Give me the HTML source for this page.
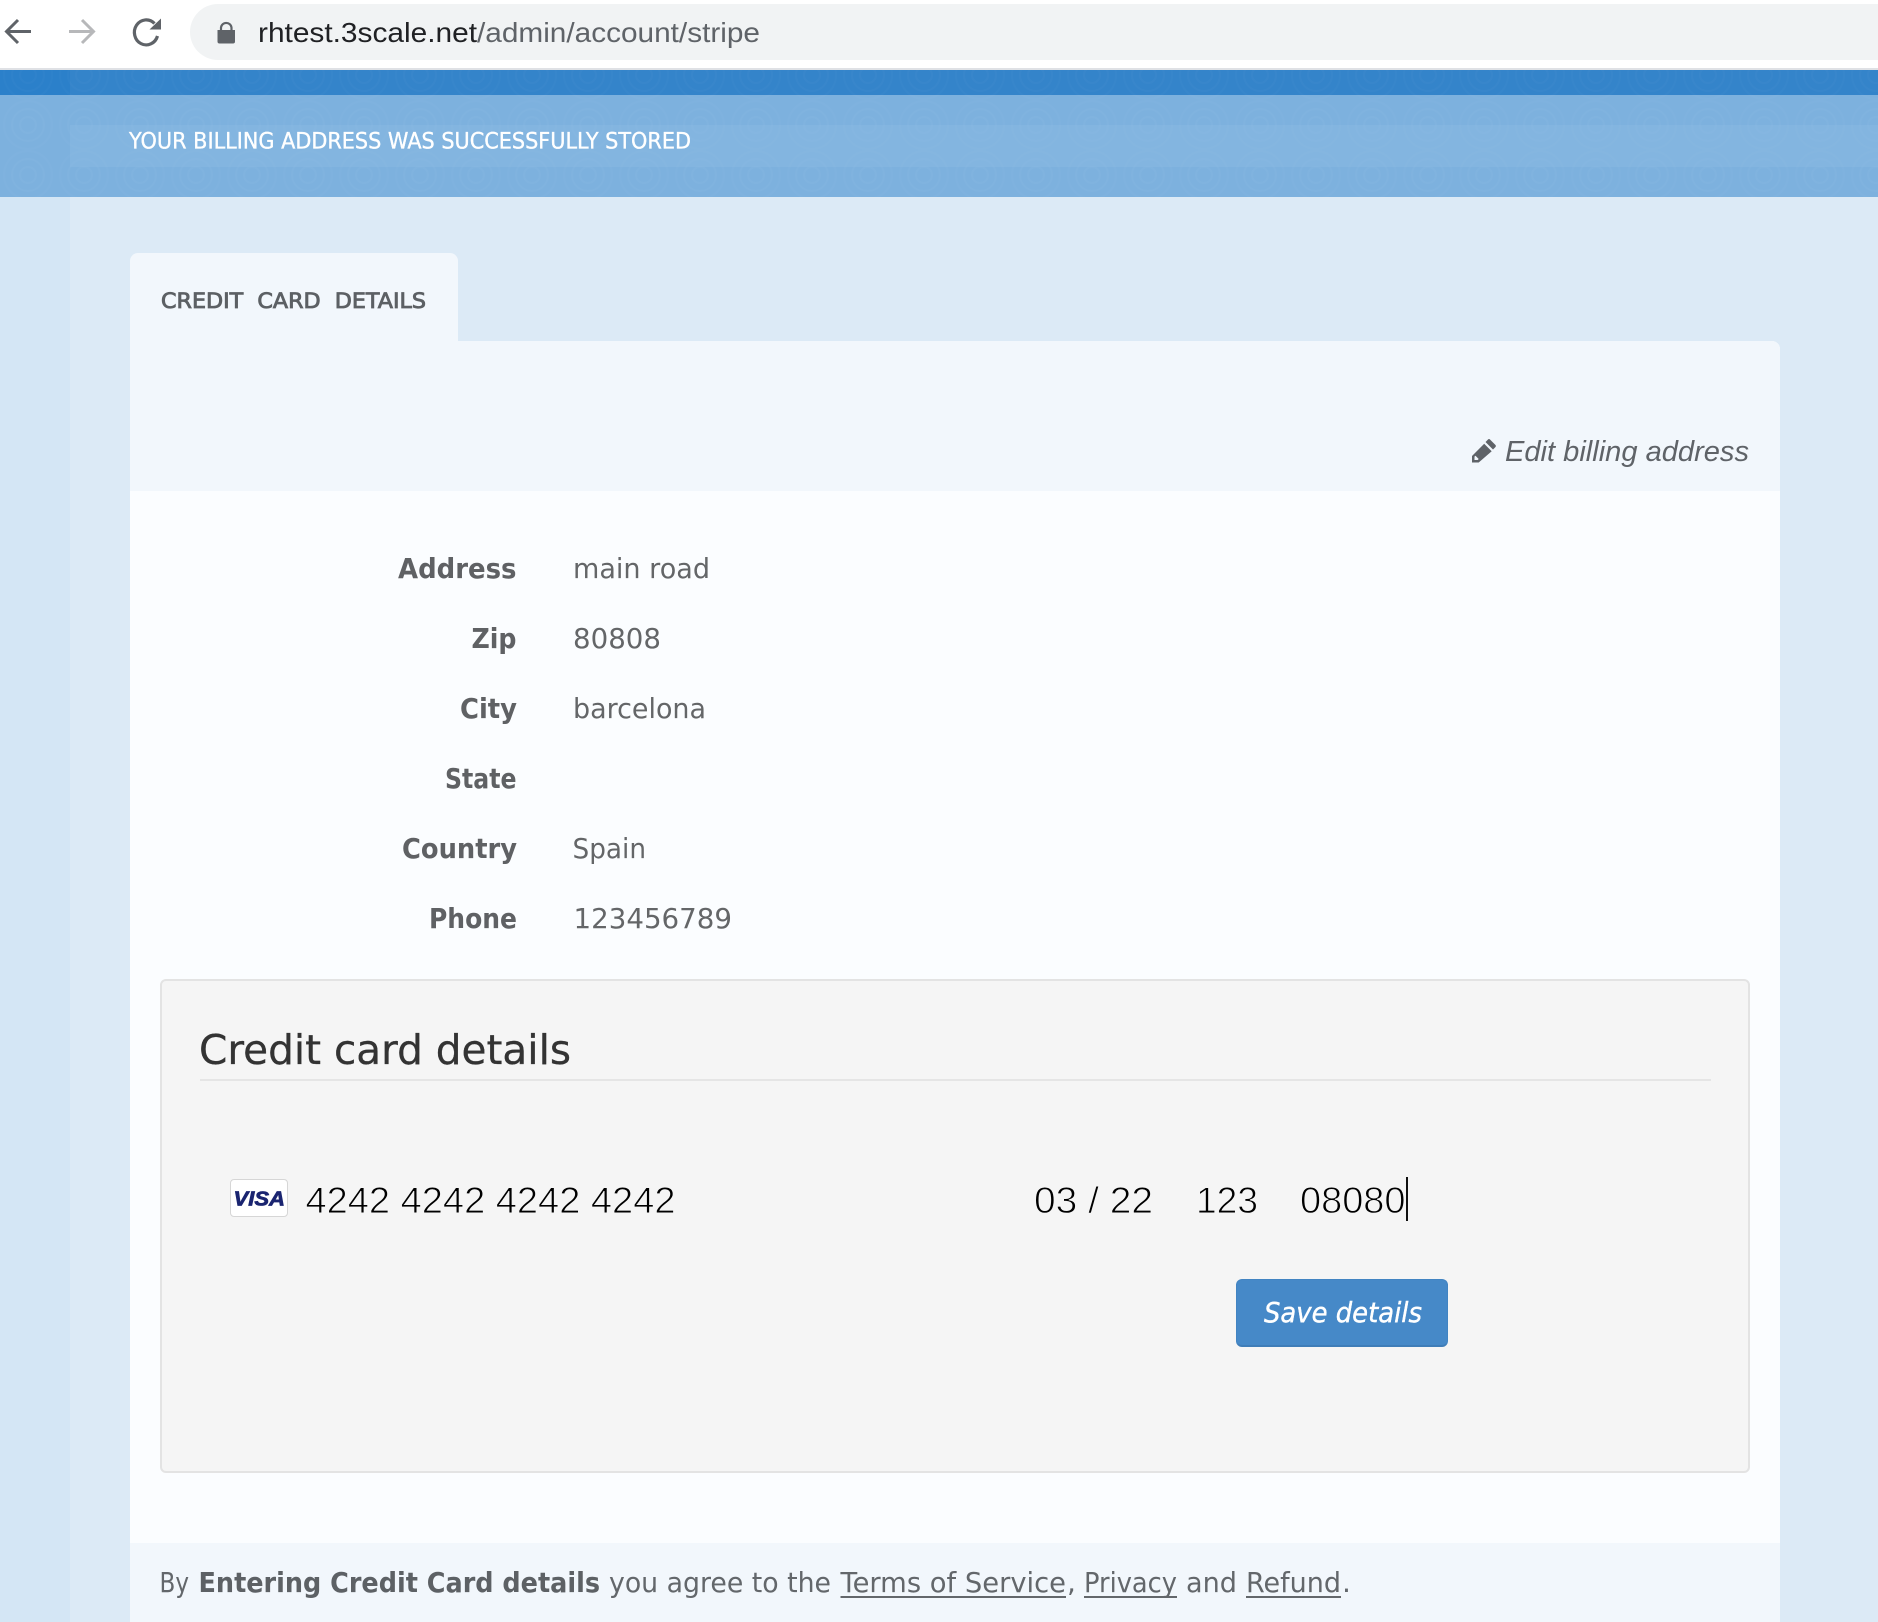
<!DOCTYPE html>
<html lang="en">
<head>
<meta charset="utf-8">
<title>Credit card details</title>
<style>
html,body{margin:0;padding:0;background:#dceaf6}
body{position:relative;width:1878px;height:1622px;overflow:hidden}
div{position:absolute;box-sizing:border-box}
svg{position:absolute;left:0;top:0}
text{white-space:pre}
.l{font-family:"DejaVu Sans",sans-serif;font-weight:700;font-size:27.5px;fill:#5f6164}
.v{font-family:"DejaVu Sans",sans-serif;font-size:27.5px;fill:#646668}
.c{font-family:"Liberation Sans",sans-serif;font-size:37px;fill:#000;stroke:#f5f5f5;stroke-width:.9px}
.f{font-family:"DejaVu Sans",sans-serif;font-size:28px;fill:#63676b}
.fb{font-family:"DejaVu Sans",sans-serif;font-size:28px;font-weight:700;fill:#5d6165}
</style>
</head>
<body>
<div style="left:0;top:0;width:1878px;height:70px;background:#fff;border-bottom:2px solid #dfe1e5"></div>
<div style="left:190px;top:4px;width:1688px;height:56px;background:#f1f3f4;border-radius:28px 0 0 28px"></div>
<div style="left:0;top:70px;width:1878px;height:25px;background:#3484ca"></div>
<div style="left:0;top:70px;width:70px;height:25px;background:#2b80ca"></div>
<div style="left:0;top:95px;width:1878px;height:102px;background:#7db1de"></div>
<div style="left:70px;top:125px;width:1808px;height:42px;background:#83b5e0"></div>
<div style="left:0;top:197px;width:70px;height:1425px;background:#d4e6f5"></div>
<div style="left:130px;top:253px;width:328px;height:90px;background:#f2f7fc;border-radius:8px 8px 0 0"></div>
<div style="left:130px;top:341px;width:1650px;height:1281px;background:#fbfdff;border-radius:0 8px 0 0;overflow:hidden">
  <div style="left:0;top:0;width:1650px;height:150px;background:#f2f7fc"></div>
  <div style="left:0;top:1202px;width:1650px;height:79px;background:#f2f7fc"></div>
</div>
<div style="left:160px;top:979px;width:1590px;height:494px;background:#f5f5f5;border:2px solid #e3e3e3;border-radius:6px"></div>
<div style="left:200px;top:1079px;width:1511px;height:2px;background:#e5e5e5"></div>
<div style="left:230px;top:1179px;width:58px;height:38px;background:#fff;border:1px solid #d6d6d6;border-radius:4px"></div>
<div style="left:1236px;top:1279px;width:212px;height:68px;background:#4689c8;border:1px solid #4284c2;border-bottom:2px solid #3f7db8;border-radius:6px"></div>

<svg width="1878" height="1622" viewBox="0 0 1878 1622" xmlns="http://www.w3.org/2000/svg">
  <defs>
    <pattern id="rings" width="56" height="50" patternUnits="userSpaceOnUse">
      <circle cx="28" cy="25" r="8" fill="none" stroke="#fff" stroke-opacity=".02" stroke-width="2"/>
      <circle cx="28" cy="25" r="16" fill="none" stroke="#fff" stroke-opacity=".018" stroke-width="2"/>
      <circle cx="28" cy="25" r="24" fill="none" stroke="#fff" stroke-opacity=".015" stroke-width="2"/>
    </pattern>
  </defs>
  <rect x="0" y="70" width="1878" height="127" fill="url(#rings)"/>

  <!-- browser icons -->
  <path d="M31 31.5H8M18 20L6.5 31.5 18 43" fill="none" stroke="#5f6368" stroke-width="3"/>
  <path d="M69 31.5H92M82 20L93.5 31.5 82 43" fill="none" stroke="#b7b8ba" stroke-width="3"/>
  <path d="M157.500 36A11.800 12.500 0 1 1 154.500 23.500" fill="none" stroke="#5f6368" stroke-width="3.200"/>
  <path d="M149.500 29.500H161V18.500Z" fill="#5f6368"/>
  <path d="M217.500 30h17.500v11.500a2 2 0 0 1-2 2h-13.500a2 2 0 0 1-2-2Z" fill="#5f6368"/>
  <path d="M221 31v-3.500a5.300 5.300 0 0 1 10.500 0V31" fill="none" stroke="#5f6368" stroke-width="2.200"/>
  <text x="258" y="42" font-family="Liberation Sans" font-size="28" fill="#202124" textLength="219" lengthAdjust="spacingAndGlyphs">rhtest.3scale.net</text>
  <text x="477" y="42" font-family="Liberation Sans" font-size="28" fill="#5f6368" textLength="283" lengthAdjust="spacingAndGlyphs">/admin/account/stripe</text>

  <!-- notice and tab -->
  <text x="129" y="148.500" font-family="DejaVu Sans" font-size="22" fill="#fff" stroke="#fff" stroke-width=".35" textLength="562" lengthAdjust="spacingAndGlyphs">YOUR BILLING ADDRESS WAS SUCCESSFULLY STORED</text>
  <text x="161" y="308" font-family="DejaVu Sans" font-size="21.500" fill="#5c6064" stroke="#5c6064" stroke-width=".85" textLength="265" lengthAdjust="spacingAndGlyphs">CREDIT  CARD  DETAILS</text>

  <!-- edit link -->
  <path d="M1490 439.500l5.500 5.500a1.500 1.500 0 0 1 0 2l-2.500 2.500-7.500-7.500 2.500-2.500a1.500 1.500 0 0 1 2 0ZM1484.200 443.700l7.500 7.500-13 11.300h-6.700v-6.500ZM1474.500 456.500v3.500h3.200l1-1-3.200-3.200Z" fill="#5f6368" fill-rule="evenodd"/>
  <text x="1505" y="461" font-family="Liberation Sans" font-style="italic" font-size="29" fill="#5f6368" textLength="244" lengthAdjust="spacingAndGlyphs">Edit billing address</text>

  <!-- address labels -->
  <text class="l" x="398" y="578" textLength="118.500" lengthAdjust="spacingAndGlyphs">Address</text>
  <text class="l" x="471.500" y="648" textLength="45" lengthAdjust="spacingAndGlyphs">Zip</text>
  <text class="l" x="460" y="718" textLength="57" lengthAdjust="spacingAndGlyphs">City</text>
  <text class="l" x="445" y="788" textLength="71.500" lengthAdjust="spacingAndGlyphs">State</text>
  <text class="l" x="402" y="858" textLength="115" lengthAdjust="spacingAndGlyphs">Country</text>
  <text class="l" x="429" y="928" textLength="88" lengthAdjust="spacingAndGlyphs">Phone</text>
  <text class="v" x="573" y="578" textLength="137" lengthAdjust="spacingAndGlyphs">main road</text>
  <text class="v" x="573" y="648" textLength="88" lengthAdjust="spacingAndGlyphs">80808</text>
  <text class="v" x="573" y="718" textLength="133" lengthAdjust="spacingAndGlyphs">barcelona</text>
  <text class="v" x="572.500" y="858" textLength="73.500" lengthAdjust="spacingAndGlyphs">Spain</text>
  <text class="v" x="573.500" y="928" textLength="158.500" lengthAdjust="spacingAndGlyphs">123456789</text>

  <!-- card form -->
  <text x="199" y="1064" font-family="DejaVu Sans" font-size="41" fill="#333" stroke="#333" stroke-width=".3" textLength="372" lengthAdjust="spacingAndGlyphs">Credit card details</text>
  <text x="233.500" y="1205.500" font-family="Liberation Sans" font-weight="700" font-style="italic" font-size="20" fill="#1a2470" stroke="#1a2470" stroke-width=".7" textLength="51.500" lengthAdjust="spacingAndGlyphs">VISA</text>
  <text class="c" x="305.500" y="1213" textLength="370" lengthAdjust="spacingAndGlyphs">4242 4242 4242 4242</text>
  <text class="c" x="1034" y="1213" textLength="119" lengthAdjust="spacingAndGlyphs">03 / 22</text>
  <text class="c" x="1196" y="1213" textLength="62" lengthAdjust="spacingAndGlyphs">123</text>
  <text class="c" x="1300" y="1213" textLength="105.500" lengthAdjust="spacingAndGlyphs">08080</text>
  <rect x="1406" y="1177" width="2" height="44" fill="#111"/>
  <text x="1264" y="1322" font-family="DejaVu Sans" font-style="italic" font-size="27.500" fill="#fff" stroke="#fff" stroke-width=".4" textLength="158" lengthAdjust="spacingAndGlyphs">Save details</text>

  <!-- footer -->
  <text class="f" x="159.500" y="1592" textLength="29.500" lengthAdjust="spacingAndGlyphs">By</text>
  <text class="fb" x="198.500" y="1592" textLength="401.500" lengthAdjust="spacingAndGlyphs">Entering Credit Card details</text>
  <text class="f" x="609" y="1592" textLength="222" lengthAdjust="spacingAndGlyphs">you agree to the</text>
  <text class="f" x="840.500" y="1592" textLength="225.500" lengthAdjust="spacingAndGlyphs">Terms of Service</text>
  <text class="f" x="1067" y="1592">,</text>
  <text class="f" x="1084" y="1592" textLength="93" lengthAdjust="spacingAndGlyphs">Privacy</text>
  <text class="f" x="1186" y="1592" textLength="51" lengthAdjust="spacingAndGlyphs">and</text>
  <text class="f" x="1246" y="1592" textLength="95" lengthAdjust="spacingAndGlyphs">Refund</text>
  <text class="f" x="1342" y="1592">.</text>
  <rect x="840.500" y="1596" width="225.500" height="2" fill="#63676b"/>
  <rect x="1084" y="1596" width="93" height="2" fill="#63676b"/>
  <rect x="1246" y="1596" width="95" height="2" fill="#63676b"/>
</svg>
</body>
</html>
